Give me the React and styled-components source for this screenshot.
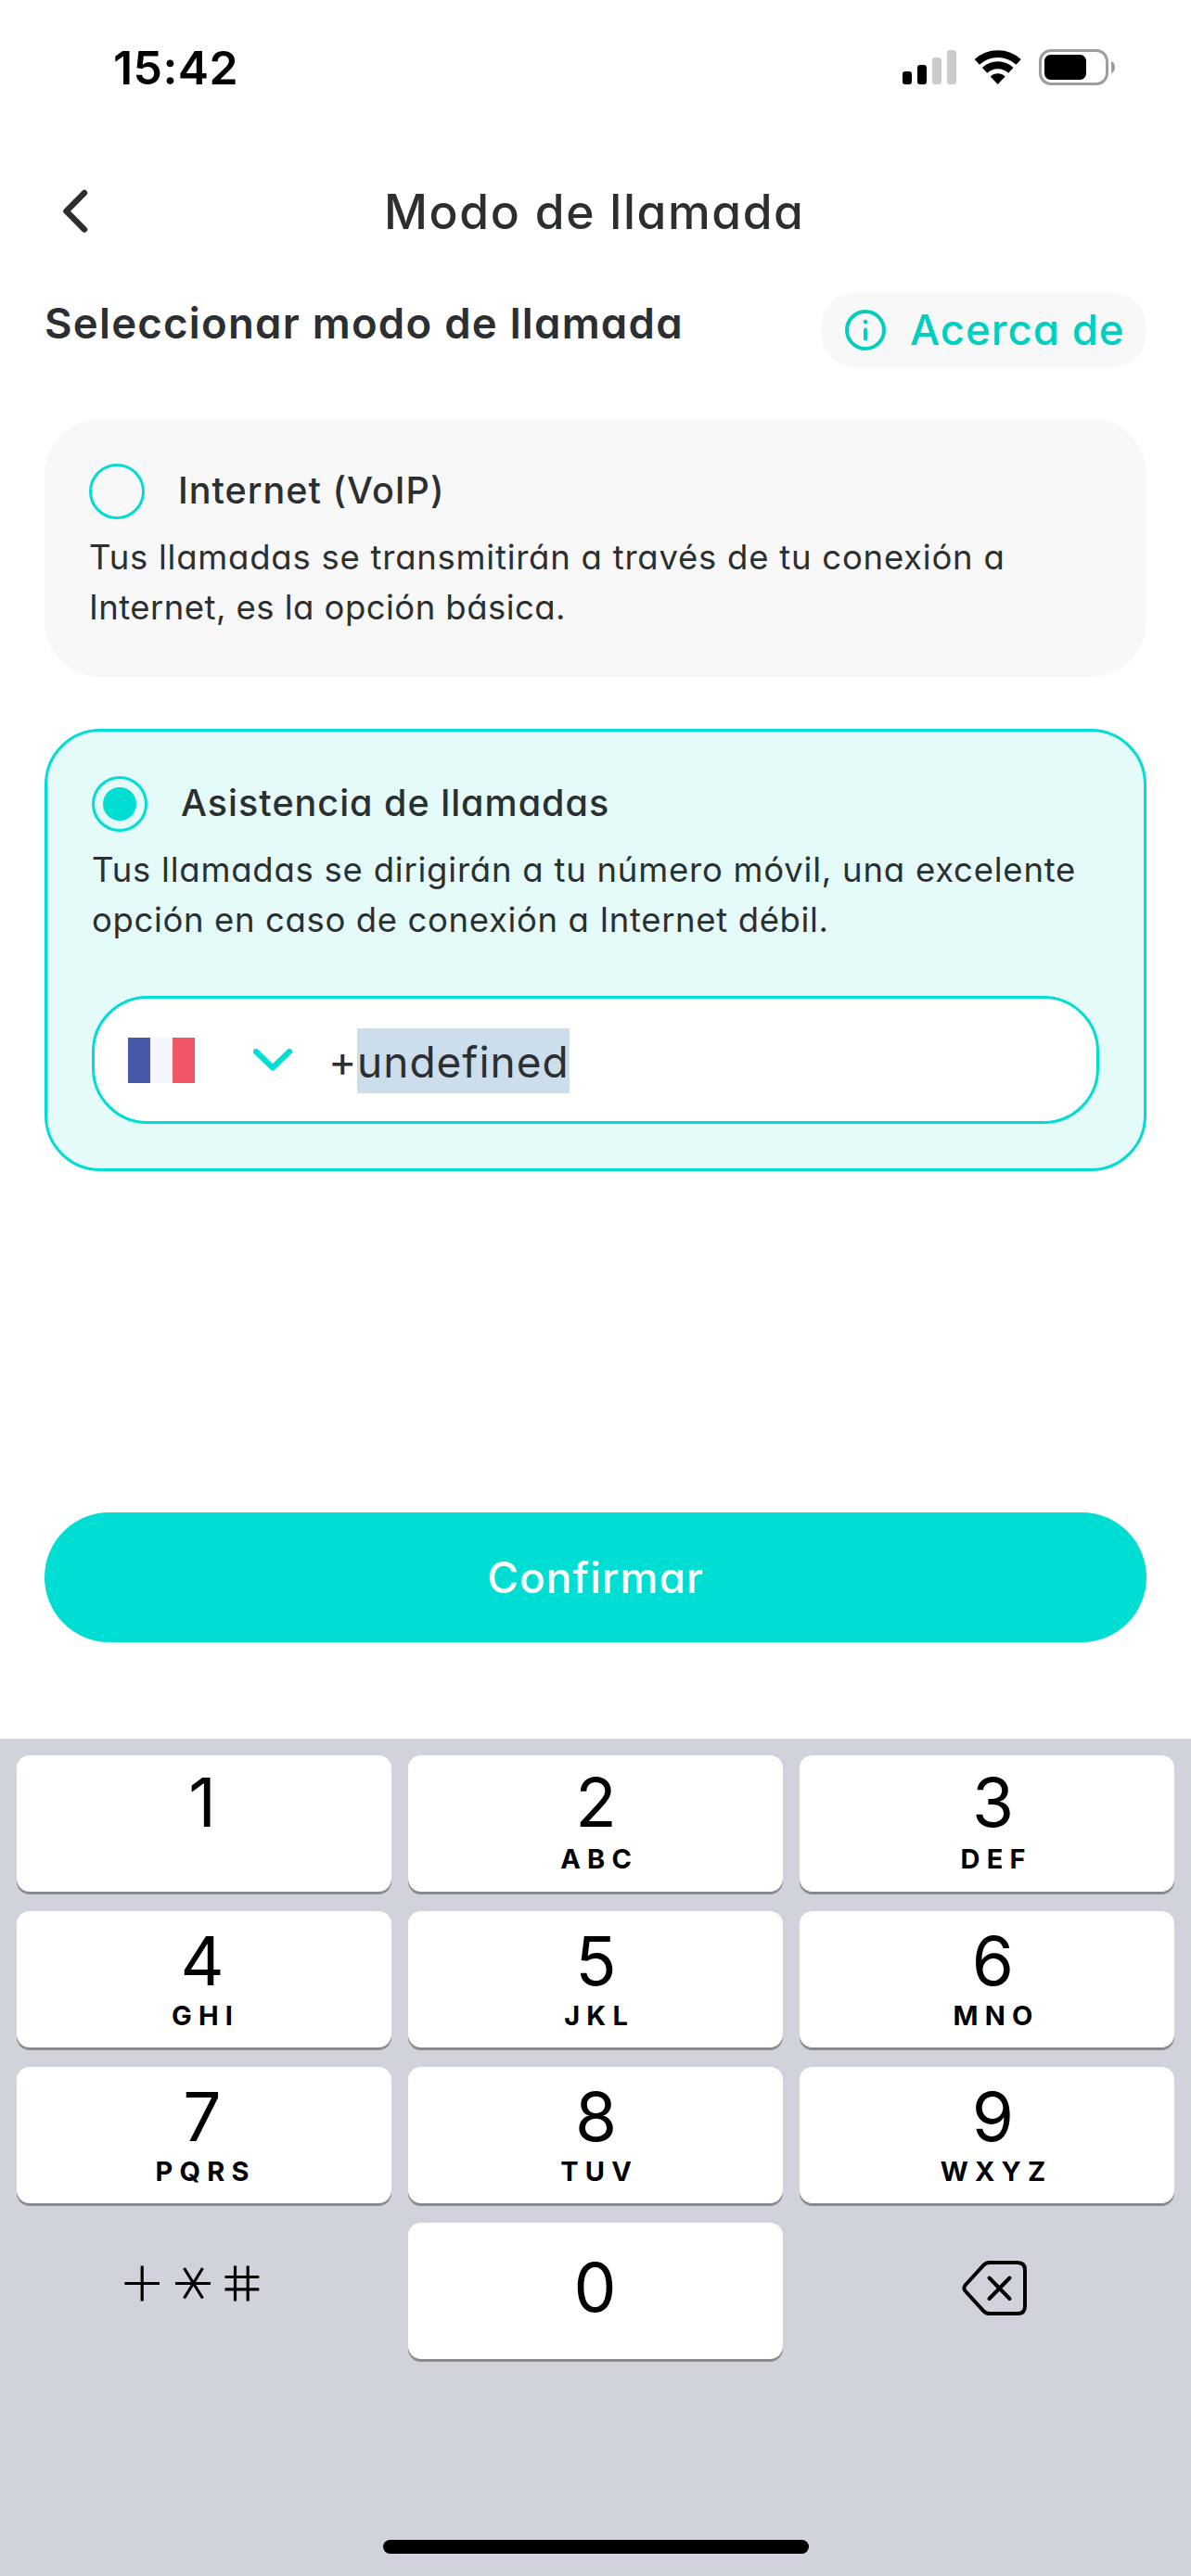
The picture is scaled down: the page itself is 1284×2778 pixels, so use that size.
import React from "react";
import styled, { createGlobalStyle } from "styled-components";

const ink = "#2b2f31";
const teal = "#00ded3";
const tealText = "#00cfc0";

const GlobalStyle = createGlobalStyle`
  * { box-sizing: border-box; }
  body {
    margin: 0;
    background: #fff;
    color: ${ink};
    font-family: Inter, "Liberation Sans", sans-serif;
  }
`;

const Screen = styled.div`
  width: 1284px;
  height: 2778px;
  display: flex;
  flex-direction: column;
  overflow: hidden;
`;

const StatusBar = styled.header`
  height: 146px;
  display: flex;
  align-items: center;
  justify-content: space-between;
  padding: 0 80px 0 122px;
  color: #000;
`;

const Time = styled.span`
  font-size: 50px;
  font-weight: 600;
  line-height: 60px;
  letter-spacing: 0.4px;
`;

const StatusIcons = styled.div`
  display: flex;
  align-items: center;
`;

const NavBar = styled.nav`
  height: 164px;
  display: grid;
  grid-template-columns: 1fr auto 1fr;
  align-items: center;
  padding: 0 68px 0 64px;
`;

const BackButton = styled.button`
  display: flex;
  width: 40px;
  padding: 0;
  border: 0;
  background: none;
`;

/* Single-storey "a" with open tracking, shared by all app copy. */
const Geo = styled.span`
  font-feature-settings: "cv11";
  white-space: nowrap;
  letter-spacing: ${(p) => p.$track || 0}px;
`;

const Title = styled(Geo)`
  font-size: 51.5px;
  font-weight: 480;
  line-height: 70px;
  margin-right: -1.5px;
`;

const Main = styled.main`
  flex: none;
  height: 1565px;
  padding: 5px 48px 104px;
  display: flex;
  flex-direction: column;
`;

const SectionHead = styled.div`
  display: flex;
  align-items: flex-start;
  justify-content: space-between;
`;

const SectionTitle = styled(Geo)`
  font-size: 45.5px;
  font-weight: 600;
  line-height: 68px;
`;

const AboutPill = styled.button`
  width: 351px;
  height: 82px;
  display: flex;
  align-items: center;
  gap: 26px;
  padding: 0 0 0 26px;
  border: 0;
  border-radius: 38px;
  background: #f8f8f8;
  color: ${tealText};
  font-family: inherit;
`;

const AboutText = styled(Geo)`
  font-size: 45.5px;
  font-weight: 500;
  line-height: 60px;
`;

const Card = styled.section`
  flex: none;
  margin-top: ${(p) => p.$top}px;
  height: ${(p) => p.$height}px;
  padding: 48px;
  border-radius: 60px;
  background: ${(p) => (p.$selected ? "#e4fbfa" : "#f8f8f8")};
  border: ${(p) => (p.$selected ? `3px solid ${teal}` : "0")};
`;

const OptionHead = styled.div`
  display: flex;
  align-items: center;
  gap: 36px;
  height: 60px;
`;

const Radio = styled.span`
  width: 60px;
  height: 60px;
  border: 3px solid ${teal};
  border-radius: 50%;
  display: grid;
  place-items: center;
`;

const RadioDot = styled.span`
  width: 36px;
  height: 36px;
  border-radius: 50%;
  background: ${teal};
`;

const OptionLabel = styled(Geo)`
  font-size: 39.5px;
  font-weight: 500;
  line-height: 54px;
  padding-bottom: 2px;
`;

const OptionText = styled.p`
  margin: 14px 0 0;
  font-size: 36.5px;
  line-height: 54px;
  display: flex;
  flex-direction: column;
  align-items: flex-start;
`;

const PhoneField = styled.div`
  margin-top: 55px;
  height: 138px;
  border: 3px solid ${teal};
  border-radius: 60px;
  background: #fff;
  display: flex;
  align-items: center;
  padding-left: 36px;
`;

const Flag = styled.span`
  width: 72px;
  height: 49px;
  display: grid;
  grid-template-columns: repeat(3, 1fr);
`;

const Stripe = styled.span`
  background: ${(p) => p.$color};
`;

const CountryChevron = styled.svg`
  width: 42px;
  height: 24px;
  margin: 0 39px 0 63px;
  fill: none;
  stroke: ${teal};
  stroke-width: 6px;
  stroke-linecap: round;
  stroke-linejoin: round;
`;

const FieldValue = styled.span`
  display: flex;
  margin-top: 2px;
  font-size: 46px;
  line-height: 67px;
`;

const Prefix = styled(Geo)`
  width: 31px;
  padding-top: 2px;
`;

const Selected = styled(Geo)`
  background: #ccddec;
  padding-top: 3px;
`;

const ConfirmButton = styled.button`
  flex: none;
  margin-top: auto;
  height: 140px;
  border: 0;
  border-radius: 70px;
  background: ${teal};
  color: #fff;
  font-family: inherit;
`;

const ConfirmText = styled(Geo)`
  font-size: 46px;
  font-weight: 480;
`;

const Keyboard = styled.footer`
  flex: 1;
  background: #d0d3db;
  padding: 18px 18px 24px;
  display: flex;
  flex-direction: column;
  align-items: center;
  justify-content: space-between;
  color: #000;
`;

const KeyGrid = styled.div`
  width: 100%;
  display: grid;
  grid-template-columns: repeat(3, 404px);
  grid-auto-rows: 147px;
  gap: 21px 18px;
`;

const Key = styled.div`
  border-radius: 14px;
  background: ${(p) => (p.$plain ? "none" : "#fff")};
  box-shadow: ${(p) => (p.$plain ? "none" : "0 3px 0 #888a8e")};
  display: flex;
  flex-direction: column;
  align-items: center;
  padding: ${(p) => p.$top}px ${(p) => (p.$shift < 0 ? -2 * p.$shift : 0)}px 0
    ${(p) => (p.$shift > 0 ? 2 * p.$shift : 0)}px;
`;

const Digit = styled.span`
  font-size: 73px;
  line-height: 80px;
`;

const Letters = styled.span`
  margin-top: ${(p) => p.$gap}px;
  font-size: 29px;
  font-weight: 650;
  line-height: 30px;
  letter-spacing: 7.2px;
  margin-right: -7.2px;
`;

const HomeIndicator = styled.div`
  width: 459px;
  height: 15px;
  border-radius: 8px;
  background: #000;
`;

const ROWS = [
  [["1", ""], ["2", "ABC"], ["3", "DEF"]],
  [["4", "GHI"], ["5", "JKL"], ["6", "MNO"]],
  [["7", "PQRS"], ["8", "TUV"], ["9", "WXYZ"]],
];
const COLUMN_SHIFT = [-2, 0.5, 6.5];

function StatusGlyphs() {
  return (
    <StatusIcons>
      <svg width="232" height="42" viewBox="972 52 232 42">
        <rect x="973" y="77" width="10" height="14" rx="3" />
        <rect x="989" y="70" width="10" height="21" rx="3" />
        <rect x="1005" y="62" width="10" height="29" rx="3" fill="#cbcbcb" />
        <rect x="1021" y="54" width="10" height="37" rx="3" fill="#cbcbcb" />
        <g fill="none" stroke="#000" strokeWidth="7.800">
          <path d="M1053.300 66.800A33 33 0 0 1 1098.100 66.800" />
          <path d="M1061.600 75.800A20.700 20.700 0 0 1 1089.800 75.800" />
        </g>
        <path d="M1075.700 91L1067.700 82.400A11.700 11.700 0 0 1 1083.700 82.400Z" />
        <rect x="1121.500" y="54.500" width="72" height="36" rx="11.500" fill="none" stroke="#9d9d9d" strokeWidth="3" />
        <rect x="1126" y="59" width="45" height="27" rx="6.500" />
        <path d="M1198 66c5.500 2 5.500 11 0 13z" fill="#9d9d9d" />
      </svg>
    </StatusIcons>
  );
}

function Option({ selected, label, lines, top, height, children }) {
  return (
    <Card $selected={selected} $top={top} $height={height}>
      <OptionHead>
        <Radio>{selected && <RadioDot />}</Radio>
        <OptionLabel $track={1}>{label}</OptionLabel>
      </OptionHead>
      <OptionText>
        {lines.map(([text, track]) => (
          <Geo key={text} $track={track}>{text}</Geo>
        ))}
      </OptionText>
      {children}
    </Card>
  );
}

export default function App() {
  return (
    <Screen>
      <GlobalStyle />
      <StatusBar>
        <Time>15:42</Time>
        <StatusGlyphs />
      </StatusBar>
      <NavBar>
        <BackButton aria-label="Atrás">
          <svg width="40" height="50" viewBox="64 203 40 50" fill="none" stroke={ink} strokeWidth="6.500" strokeLinecap="round" strokeLinejoin="round">
            <path d="M91 208L71.500 227.800L91 247.500" />
          </svg>
        </BackButton>
        <Title $track={1.6}>Modo de llamada</Title>
      </NavBar>
      <Main>
        <SectionHead>
          <SectionTitle $track={1.25}>Seleccionar modo de llamada</SectionTitle>
          <AboutPill>
            <svg width="44" height="44" viewBox="0 0 44 44" fill="none" stroke={tealText} strokeWidth="4">
              <circle cx="22" cy="22" r="20" />
              <path d="M22 21.500V31.500" strokeLinecap="round" />
              <circle cx="22" cy="13" r="2.300" fill={tealText} stroke="none" />
            </svg>
            <AboutText $track={0.95}>Acerca de</AboutText>
          </AboutPill>
        </SectionHead>
        <Option
          top={55}
          height={278}
          label="Internet (VoIP)"
          lines={[
            ["Tus llamadas se transmitirán a través de tu conexión a", 0.76],
            ["Internet, es la opción básica.", 0.45],
          ]}
        />
        <Option
          selected
          top={56}
          height={477}
          label="Asistencia de llamadas"
          lines={[
            ["Tus llamadas se dirigirán a tu número móvil, una excelente", 0.77],
            ["opción en caso de conexión a Internet débil.", 0.63],
          ]}
        >
          <PhoneField>
            <Flag>
              <Stripe $color="#4758a9" />
              <Stripe $color="#f5f6fa" />
              <Stripe $color="#ef5565" />
            </Flag>
            <CountryChevron viewBox="0 0 42 24">
              <path d="M3 3L21 20.500L39 3" />
            </CountryChevron>
            <FieldValue>
              <Prefix>+</Prefix>
              <Selected $track={1}>undefined</Selected>
            </FieldValue>
          </PhoneField>
        </Option>
        <ConfirmButton>
          <ConfirmText $track={1.1}>Confirmar</ConfirmText>
        </ConfirmButton>
      </Main>
      <Keyboard>
        <KeyGrid>
          {ROWS.map((row, r) =>
            row.map(([digit, letters], c) => (
              <Key key={digit} $top={r === 0 ? 10.5 : 13.5} $shift={COLUMN_SHIFT[c]}>
                <Digit>{digit}</Digit>
                {letters && <Letters $gap={r === 0 ? 6 : 4}>{letters}</Letters>}
              </Key>
            ))
          )}
          <Key $plain $top={46} $shift={-13}>
            <svg width="146" height="39" viewBox="134 2442.500 146 39" fill="none" stroke="#000" strokeWidth="3.200">
              <path d="M134.300 2462H172M153.200 2443V2481" />
              <path d="M189 2462H227M198.500 2445.500L218.500 2478M218.500 2445.500L198.500 2478" />
              <path d="M242.500 2455H279.300M242.500 2468.300H279.300M253.500 2443V2481M267.200 2443V2481" />
            </svg>
          </Key>
          <Key $top={30} $shift={-0.5}>
            <Digit>0</Digit>
          </Key>
          <Key $plain $top={41} $shift={7.5}>
            <svg width="70" height="60" viewBox="0 0 70 60" fill="none" stroke="#000" strokeWidth="4" strokeLinecap="round" strokeLinejoin="round">
              <path d="M30 2H60Q68 2 68 10V49Q68 57 60 57H30Q26 57 23.500 54.300L3.500 32.500Q1.500 29.500 3.500 26.500L23.500 4.700Q26 2 30 2Z" />
              <path d="M29.500 18.500L51.500 41M51.500 18.500L29.500 41" />
            </svg>
          </Key>
        </KeyGrid>
        <HomeIndicator />
      </Keyboard>
    </Screen>
  );
}
